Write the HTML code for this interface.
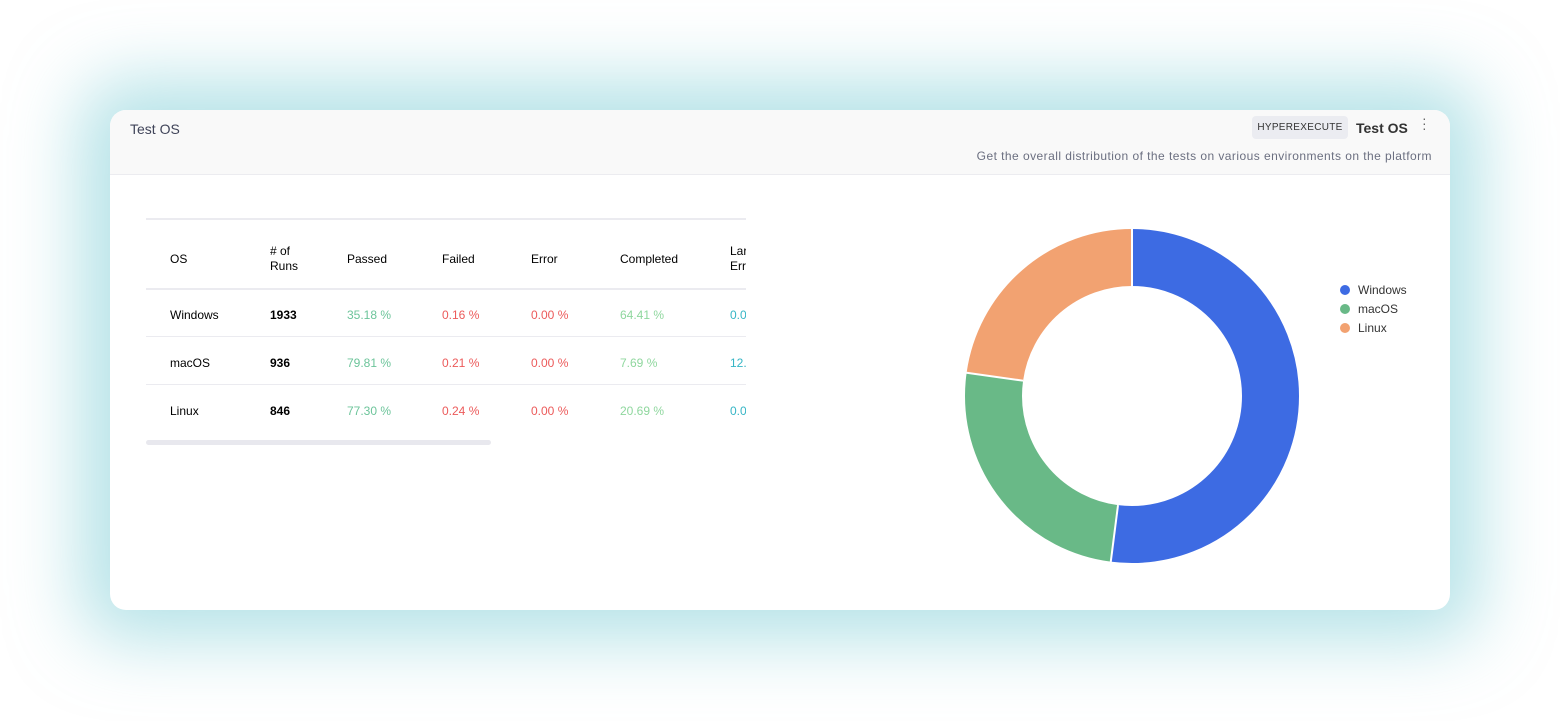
<!DOCTYPE html>
<html><head><style>
body{margin:0;width:1560px;height:721px;background:#fff;overflow:hidden;font-family:"Liberation Sans",sans-serif;position:relative}
.card{position:absolute;left:110px;top:110px;width:1340px;height:500px;background:#fff;border-radius:16px;box-shadow:0 0 70px 30px rgba(110,200,210,.5);overflow:hidden}
.hd{height:64px;background:#f9f9f9;border-bottom:1px solid #ececf0;position:relative}
.t1{position:absolute;left:20px;top:11px;font-size:14px;color:#404459}
.badge{position:absolute;left:1142px;top:6px;width:96px;height:23px;background:#ebecf1;border-radius:4px;font-size:10px;color:#333;text-align:center;line-height:23px;letter-spacing:.3px}
.t2{position:absolute;left:1246px;top:10px;font-size:14px;color:#333;font-weight:bold}
.dots{position:absolute;left:1312px;top:6px;font-size:14px;color:#666;line-height:5px;width:4px;text-align:center}
.sub{position:absolute;right:18px;top:39px;font-size:12px;letter-spacing:.45px;color:#6b6f80}
.tbl{position:absolute;left:36px;top:108px;width:600px;height:230px;overflow:hidden;font-size:12px}
.line{position:absolute;left:0;width:600px;height:2px;background:#ebebf0}
.c{position:absolute;white-space:nowrap}
.g{color:#6cc49a}.r{color:#ec5a5a}.lg{color:#8fd79e}.b{color:#35b5c5}
.sb{position:absolute;left:36px;top:330px;width:345px;height:5px;background:#e8e8ee;border-radius:3px}
.leg{position:absolute;left:1230px;font-size:12px;color:#333}
.leg i{display:inline-block;width:10px;height:10px;border-radius:50%;margin-right:8px;vertical-align:-1px}
</style></head><body>
<div class="card">
<div class="hd"><div class="t1">Test OS</div><div class="badge">HYPEREXECUTE</div><div class="t2">Test OS</div><div class="dots">·<br>·<br>·</div><div class="sub">Get the overall distribution of the tests on various environments on the platform</div></div>
<div class="tbl">
<div class="line" style="top:0"></div>
<div class="line" style="top:70px"></div>
<div class="line" style="top:118px;height:1px"></div>
<div class="line" style="top:166px;height:1px"></div>
<div class="c" style="left:24px;top:34px">OS</div>
<div class="c" style="left:124px;top:26px;line-height:15px"># of<br>Runs</div>
<div class="c" style="left:201px;top:34px">Passed</div>
<div class="c" style="left:296px;top:34px">Failed</div>
<div class="c" style="left:385px;top:34px">Error</div>
<div class="c" style="left:474px;top:34px">Completed</div>
<div class="c" style="left:584px;top:26px;line-height:15px">Lar<br>Err</div>

<div class="c" style="left:24px;top:90px">Windows</div><div class="c" style="left:124px;top:90px;font-weight:bold">1933</div><div class="c g" style="left:201px;top:90px">35.18 %</div><div class="c r" style="left:296px;top:90px">0.16 %</div><div class="c r" style="left:385px;top:90px">0.00 %</div><div class="c lg" style="left:474px;top:90px">64.41 %</div><div class="c b" style="left:584px;top:90px">0.0</div>
<div class="c" style="left:24px;top:138px">macOS</div><div class="c" style="left:124px;top:138px;font-weight:bold">936</div><div class="c g" style="left:201px;top:138px">79.81 %</div><div class="c r" style="left:296px;top:138px">0.21 %</div><div class="c r" style="left:385px;top:138px">0.00 %</div><div class="c lg" style="left:474px;top:138px">7.69 %</div><div class="c b" style="left:584px;top:138px">12.</div>
<div class="c" style="left:24px;top:186px">Linux</div><div class="c" style="left:124px;top:186px;font-weight:bold">846</div><div class="c g" style="left:201px;top:186px">77.30 %</div><div class="c r" style="left:296px;top:186px">0.24 %</div><div class="c r" style="left:385px;top:186px">0.00 %</div><div class="c lg" style="left:474px;top:186px">20.69 %</div><div class="c b" style="left:584px;top:186px">0.0</div>
</div>
<div class="sb"></div>
<svg style="position:absolute;left:0;top:0" width="1340" height="500">
<g transform="translate(1022,286) rotate(-90)" fill="none" stroke-width="57">
<circle r="138.5" stroke="#3d6be3" stroke-dasharray="452.8 870.2"/>
<circle r="138.5" stroke="#69b987" stroke-dasharray="0 452.8 219.3 870.2"/>
<circle r="138.5" stroke="#f2a271" stroke-dasharray="0 672.1 198.1 870.2"/>
<g stroke="#fff" stroke-width="2">
<line x1="110" y1="0" x2="168" y2="0"/>
<line x1="110" y1="0" x2="168" y2="0" transform="rotate(187.3)"/>
<line x1="110" y1="0" x2="168" y2="0" transform="rotate(278)"/>
</g></g></svg>
<div class="leg" style="top:173px"><i style="background:#3d6be3"></i>Windows</div>
<div class="leg" style="top:192px"><i style="background:#69b987"></i>macOS</div>
<div class="leg" style="top:211px"><i style="background:#f2a271"></i>Linux</div>
</div>
</body></html>
